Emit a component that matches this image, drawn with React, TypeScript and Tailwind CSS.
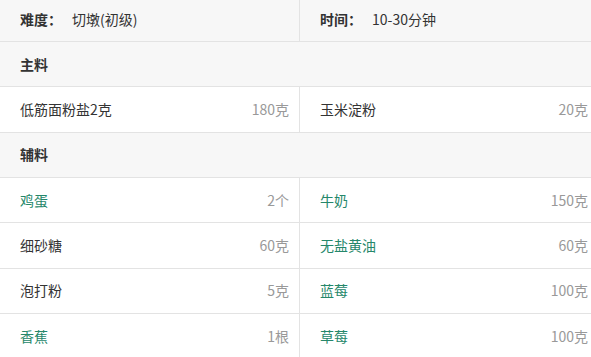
const font = { fontFamily: '"Microsoft YaHei", "Noto Sans CJK SC", "Liberation Sans", sans-serif' };

type Item = { name: string; amount: string; link?: boolean };

const main: [Item, Item][] = [
  [
    { name: '低筋面粉盐2克', amount: '180克' },
    { name: '玉米淀粉', amount: '20克' },
  ],
];

const extra: [Item, Item][] = [
  [
    { name: '鸡蛋', amount: '2个', link: true },
    { name: '牛奶', amount: '150克', link: true },
  ],
  [
    { name: '细砂糖', amount: '60克' },
    { name: '无盐黄油', amount: '60克', link: true },
  ],
  [
    { name: '泡打粉', amount: '5克' },
    { name: '蓝莓', amount: '100克', link: true },
  ],
  [
    { name: '香蕉', amount: '1根', link: true },
    { name: '草莓', amount: '100克', link: true },
  ],
];

function Cell({ item, left }: { item: Item; left?: boolean }) {
  return (
    <div
      className={
        left
          ? 'flex w-[300px] shrink-0 items-center justify-between border-r border-[#e3e3e3] pl-5 pr-[10px]'
          : 'flex flex-1 items-center justify-between pl-5 pr-[3px]'
      }
    >
      <span className={item.link ? 'text-[#25876a]' : 'text-[#333]'}>{item.name}</span>
      <span className="text-[#999]">{item.amount}</span>
    </div>
  );
}

function Row({ pair }: { pair: [Item, Item] }) {
  return (
    <div className="flex h-[45.33px] border-b border-[#e3e3e3] bg-white">
      <Cell item={pair[0]} left />
      <Cell item={pair[1]} />
    </div>
  );
}

function Section({ title }: { title: string }) {
  return (
    <div className="flex h-[45.33px] items-center border-b border-[#e3e3e3] bg-[#f7f7f7] pl-5 font-bold text-[#333]">
      {title}
    </div>
  );
}

export default function App() {
  return (
    <div className="h-[357px] w-[591px] overflow-hidden bg-white text-[14px]" style={font}>
      <div className="flex h-[42px] border-b border-[#e3e3e3] bg-[#f7f7f7] text-[#333]">
        <div className="flex w-[300px] shrink-0 items-center border-r border-[#e3e3e3] pl-5 pb-[2px]">
          <span className="w-[52px] font-bold">难度：</span>
          <span>切墩(初级)</span>
        </div>
        <div className="flex flex-1 items-center pl-5 pb-[2px]">
          <span className="w-[52px] font-bold">时间：</span>
          <span>10-30分钟</span>
        </div>
      </div>
      <Section title="主料" />
      {main.map((p, i) => (
        <Row key={i} pair={p} />
      ))}
      <Section title="辅料" />
      {extra.map((p, i) => (
        <Row key={i} pair={p} />
      ))}
    </div>
  );
}
